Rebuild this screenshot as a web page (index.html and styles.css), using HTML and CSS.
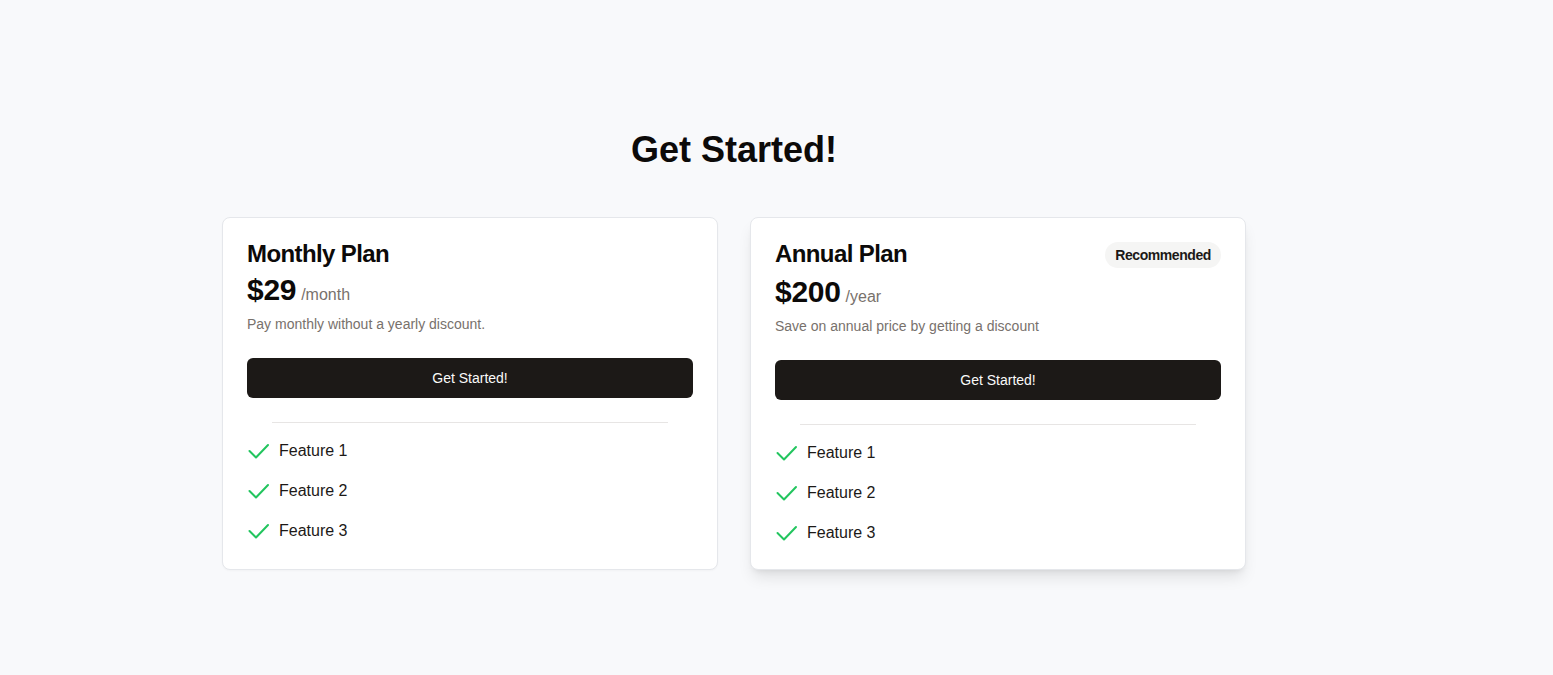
FILE: index.html
```html
<!DOCTYPE html>
<html lang="en">
<head>
<meta charset="utf-8">
<title>Pricing</title>
<link rel="stylesheet" href="styles.css">
</head>
<body>
<main class="page">
  <section class="pricing">
    <h1 class="heading">Get Started!</h1>
    <div class="plans">
      <div class="card">
        <div class="card-header">
          <div class="title-row">
            <h2 class="plan-title">Monthly Plan</h2>
          </div>
          <div class="price-row">
            <span class="price">$29</span>
            <span class="period">/month</span>
          </div>
          <p class="desc">Pay monthly without a yearly discount.</p>
        </div>
        <div class="card-content">
          <button class="cta">Get Started!</button>
          <div class="sep"></div>
          <ul class="features">
            <li class="feature"><svg class="check" viewBox="0 0 24 24" width="24" height="24"><path d="M2.5 12 L9 18.5 L21 6"/></svg><span>Feature 1</span></li>
            <li class="feature"><svg class="check" viewBox="0 0 24 24" width="24" height="24"><path d="M2.5 12 L9 18.5 L21 6"/></svg><span>Feature 2</span></li>
            <li class="feature"><svg class="check" viewBox="0 0 24 24" width="24" height="24"><path d="M2.5 12 L9 18.5 L21 6"/></svg><span>Feature 3</span></li>
          </ul>
        </div>
      </div>
      <div class="card card-featured">
        <div class="card-header">
          <div class="title-row">
            <h2 class="plan-title">Annual Plan</h2>
            <span class="badge">Recommended</span>
          </div>
          <div class="price-row">
            <span class="price">$200</span>
            <span class="period">/year</span>
          </div>
          <p class="desc">Save on annual price by getting a discount</p>
        </div>
        <div class="card-content">
          <button class="cta">Get Started!</button>
          <div class="sep"></div>
          <ul class="features">
            <li class="feature"><svg class="check" viewBox="0 0 24 24" width="24" height="24"><path d="M2.5 12 L9 18.5 L21 6"/></svg><span>Feature 1</span></li>
            <li class="feature"><svg class="check" viewBox="0 0 24 24" width="24" height="24"><path d="M2.5 12 L9 18.5 L21 6"/></svg><span>Feature 2</span></li>
            <li class="feature"><svg class="check" viewBox="0 0 24 24" width="24" height="24"><path d="M2.5 12 L9 18.5 L21 6"/></svg><span>Feature 3</span></li>
          </ul>
        </div>
      </div>
    </div>
  </section>
</main>
</body>
</html>
```

FILE: styles.css
```css
* { box-sizing: border-box; }
html, body {
  margin: 0;
  padding: 0;
}
body {
  background: #f8f9fb;
  font-family: "Liberation Sans", Arial, sans-serif;
  color: #0c0a09;
  min-height: 675px;
}
.page {
  padding: 130px 0 0 222px;
}
.pricing {
  width: 1024px;
}
.heading {
  margin: 0 0 47px;
  font-size: 36px;
  line-height: 40px;
  font-weight: 700;
  text-align: center;
  color: #0c0a09;
}
.plans {
  display: grid;
  grid-template-columns: 1fr 1fr;
  gap: 32px;
}
.card {
  background: #ffffff;
  border: 1px solid #e5e7eb;
  border-radius: 8px;
  box-shadow: 0 1px 2px rgba(0,0,0,0.03);
}
.card-featured {
  box-shadow: 0 10px 15px -3px rgba(0,0,0,0.1), 0 4px 6px -4px rgba(0,0,0,0.1);
}
.card-header {
  padding: 24px;
  display: flex;
  flex-direction: column;
  gap: 6px;
}
.title-row {
  display: flex;
  justify-content: space-between;
  align-items: flex-start;
}
.plan-title {
  margin: 0;
  font-size: 24px;
  line-height: 24px;
  font-weight: 700;
  letter-spacing: -0.025em;
  color: #0c0a09;
}
.badge {
  background: #f5f5f4;
  color: #1c1917;
  border-radius: 999px;
  padding: 3px 10px;
  font-size: 14px;
  line-height: 20px;
  font-weight: 700;
  letter-spacing: -0.03em;
}
.price-row {
  display: flex;
  align-items: baseline;
  gap: 5px;
}
.price {
  font-size: 30px;
  line-height: 36px;
  font-weight: 700;
  letter-spacing: -0.01em;
  color: #0c0a09;
}
.period {
  font-size: 16px;
  line-height: 24px;
  color: #78716c;
}
.desc {
  margin: 0;
  font-size: 14px;
  line-height: 20px;
  color: #78716c;
}
.card-content {
  padding: 0 24px 24px;
}
.cta {
  display: block;
  width: 100%;
  height: 40px;
  border: 0;
  border-radius: 6px;
  background: #1c1917;
  color: #fafaf9;
  font-family: "Liberation Sans", Arial, sans-serif;
  font-size: 14px;
  cursor: pointer;
}
.sep {
  height: 1px;
  background: #e7e5e4;
  margin: 24px 25px 0;
}
.features {
  list-style: none;
  margin: 16px 0 0;
  padding: 0;
  display: flex;
  flex-direction: column;
  gap: 16px;
}
.feature {
  display: flex;
  align-items: center;
  gap: 8px;
  font-size: 16px;
  line-height: 24px;
  color: #1c1917;
}
.check {
  flex: none;
  fill: none;
  stroke: #22c55e;
  stroke-width: 2;
  stroke-linecap: round;
  stroke-linejoin: round;
}
```
